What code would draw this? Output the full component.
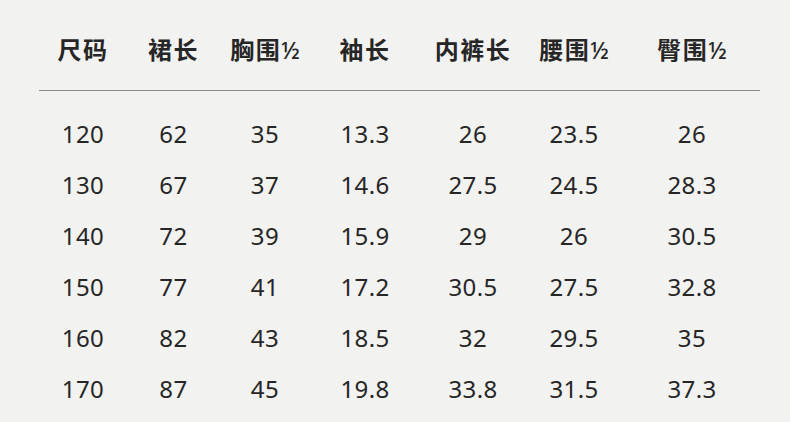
const headers = ['尺码', '裙长', '胸围½', '袖长', '内裤长', '腰围½', '臀围½'];

const rows = [
  ['120', '62', '35', '13.3', '26', '23.5', '26'],
  ['130', '67', '37', '14.6', '27.5', '24.5', '28.3'],
  ['140', '72', '39', '15.9', '29', '26', '30.5'],
  ['150', '77', '41', '17.2', '30.5', '27.5', '32.8'],
  ['160', '82', '43', '18.5', '32', '29.5', '35'],
  ['170', '87', '45', '19.8', '33.8', '31.5', '37.3'],
];

const cols = 'grid grid-cols-[90px_91px_92px_108px_108px_94px_142px]';

// split "胸围½" so the fraction can be drawn lighter, like the reference
function Head({ text }: { text: string }) {
  const half = text.endsWith('½');
  const base = half ? text.slice(0, -1) : text;
  return (
    <div className="text-center">
      {base}
      {half && <span className="font-medium text-[23px] tracking-normal">½</span>}
    </div>
  );
}

export default function App() {
  return (
    <div
      className="w-[790px] h-[422px] overflow-hidden bg-[#f2f2f0] text-[#262626]"
      style={{ fontFamily: '"Noto Sans", "Noto Sans CJK SC", sans-serif' }}
    >
      <div className="pl-[38px] pt-[24px]">
        <div className={`${cols} h-[51px] items-center text-[24px] font-bold tracking-[1.5px]`}>
          {headers.map((h) => (
            <Head key={h} text={h} />
          ))}
        </div>
      </div>
      <div className="mx-[39px] mt-[15px] h-px bg-[#8c8c8c] w-[721px]" />
      <div className="pl-[38px] pt-[17px]">
        {rows.map((r, i) => (
          <div key={i} className={`${cols} h-[51px] items-center text-[24px] leading-[51px] tracking-[0.4px]`}>
            {r.map((v, j) => (
              <div key={j} className="text-center">
                {v}
              </div>
            ))}
          </div>
        ))}
      </div>
    </div>
  );
}
